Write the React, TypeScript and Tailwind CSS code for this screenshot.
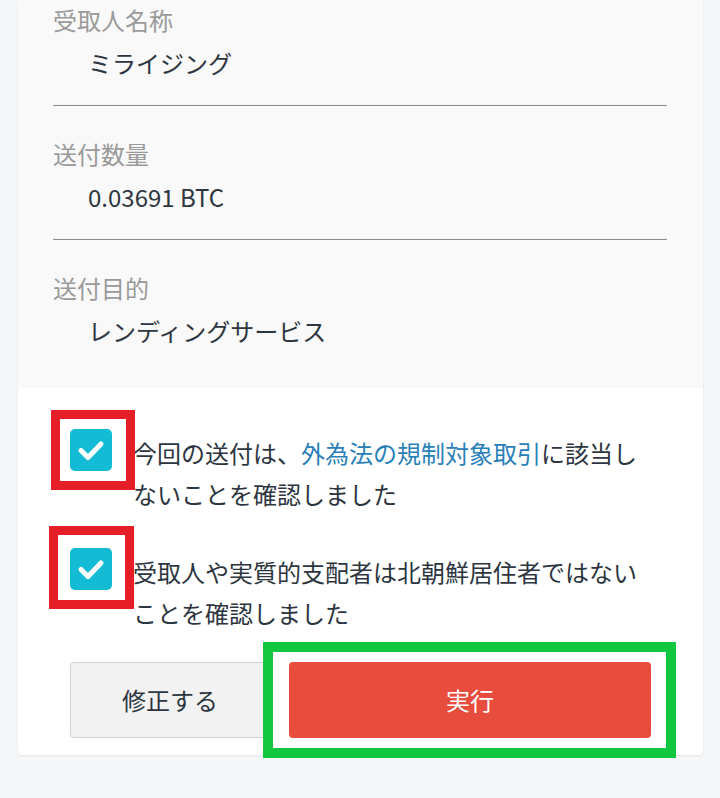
const FONT = "font-['Noto_Sans_CJK_JP','Noto_Sans',sans-serif]";

const ITEMS = [
  { label: '受取人名称', value: 'ミライジング' },
  { label: '送付数量', value: '0.03691 BTC' },
  { label: '送付目的', value: 'レンディングサービス' },
];

function Check() {
  return (
    <div className="w-[42px] h-[42px] shrink-0 rounded-[5px] bg-[#13bcd4] flex items-center justify-center">
      <svg width="42" height="42" viewBox="0 0 42 42" fill="none">
        <polyline points="11,21.5 18,28.5 31,15" stroke="#fff" strokeWidth="5" strokeLinecap="round" strokeLinejoin="round" />
      </svg>
    </div>
  );
}

export default function App() {
  return (
    <div className={`min-h-[798px] bg-[#f6f7f9] ${FONT}`}>
      <div className="ml-[18px] w-[685px] bg-white rounded-b-[4px] shadow-[0_1px_3px_rgba(0,0,0,0.08)]">
        {/* details */}
        <div className="bg-[#f9f9f9] pl-[35px] pr-[36px] pb-[39px]">
          {ITEMS.map((item, i) => (
            <div
              key={item.label}
              className={`${i === 0 ? 'pt-[2px]' : 'pt-[30px]'} ${i < ITEMS.length - 1 ? 'pb-[24px] border-b border-[#8c8c8c]' : ''}`}
            >
              <div className="text-[24px] leading-[36px] text-[#9a9a9a]">{item.label}</div>
              <div className="mt-[7px] pl-[35px] text-[24px] leading-[36px] text-[#2d3640]">{item.value}</div>
            </div>
          ))}
        </div>

        {/* confirmations */}
        <div className="px-[52px] pt-[41px] pb-[17px]">
          <div className="flex gap-[21px]">
            <div className="relative">
              <Check />
              <div className="absolute left-[-19px] top-[-19px] w-[84px] h-[80px] border-[9px] border-[#e61e27]" />
            </div>
            <p className="mt-[3px] text-[24px] leading-[41px] text-[#2d3640]">
              今回の送付は、<span className="text-[#2980b9]">外為法の規制対象取引</span>に該当しないことを確認しました
            </p>
          </div>

          <div className="flex gap-[21px] mt-[34px]">
            <div className="relative">
              <Check />
              <div className="absolute left-[-21px] top-[-22px] w-[85px] h-[83px] border-[9px] border-[#e61e27]" />
            </div>
            <p className="mt-[3px] text-[24px] leading-[41px] text-[#2d3640]">
              受取人や実質的支配者は北朝鮮居住者ではないことを確認しました
            </p>
          </div>

          <div className="flex gap-[19px] mt-[29px]">
            <button className="w-[200px] h-[76px] rounded-[4px] border border-[#cfcfcf] bg-[#f2f2f2] text-[24px] text-[#2d3640]">
              修正する
            </button>
            <div className="relative flex-1">
              <button className="w-full h-[76px] rounded-[4px] bg-[#e74c3c] text-[24px] text-white">実行</button>
              <div className="absolute left-[-26px] top-[-20px] right-[-25px] bottom-[-20px] border-[10px] border-[#12c640]" />
            </div>
          </div>
        </div>
      </div>
    </div>
  );
}
